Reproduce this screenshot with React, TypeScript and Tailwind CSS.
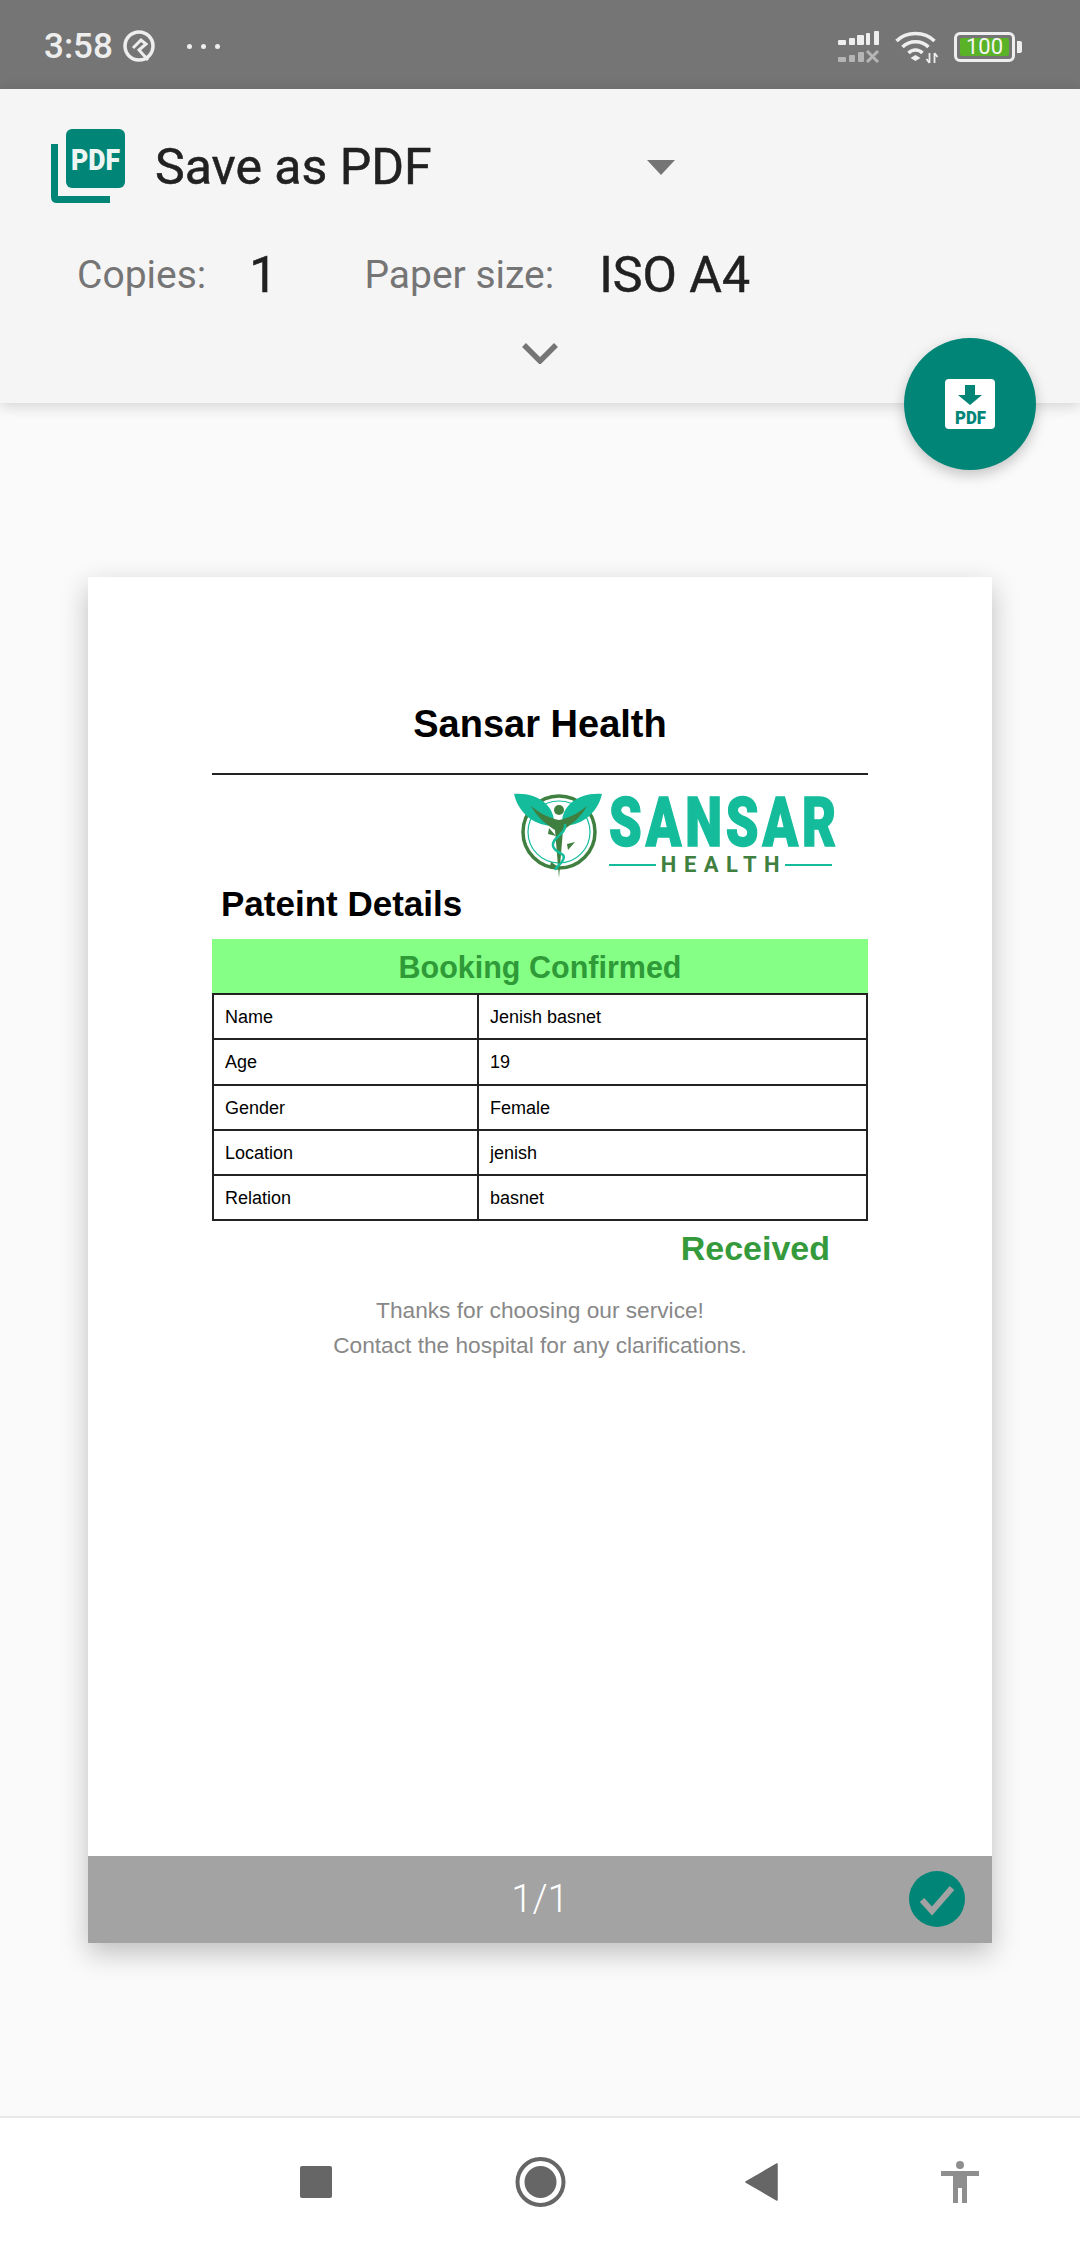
const rows = [
  ['Name', 'Jenish basnet'],
  ['Age', '19'],
  ['Gender', 'Female'],
  ['Location', 'jenish'],
  ['Relation', 'basnet'],
];

function StatusBar() {
  return (
    <div className="h-[89px] bg-[#757575] flex items-center pt-[4px] relative shrink-0">
      <span className="ml-[44px] font-['Roboto',sans-serif] font-medium text-[35px] leading-none text-[#eeeeee]">3:58</span>
      <svg width="36" height="36" viewBox="0 0 36 36" className="ml-[8px]">
        <circle cx="18" cy="17" r="14" fill="none" stroke="#eeeeee" strokeWidth="3.5" />
        <path d="M12 19 L20 11 L25 15 L18 21 L27 31" fill="none" stroke="#eeeeee" strokeWidth="3" />
      </svg>
      <div className="ml-[30px] flex gap-[9px]">
        <span className="w-[5px] h-[5px] rounded-full bg-[#eeeeee]" />
        <span className="w-[5px] h-[5px] rounded-full bg-[#eeeeee]" />
        <span className="w-[5px] h-[5px] rounded-full bg-[#eeeeee]" />
      </div>
      <div className="ml-auto mr-[58px] flex items-center">
        <svg width="42" height="32" viewBox="0 0 42 32" className="mr-[14px]">
          <g fill="#eeeeee">
            <rect x="0" y="9" width="8" height="5" rx="1" />
            <rect x="11" y="7" width="6" height="7" rx="1" />
            <rect x="19" y="4" width="7" height="10" rx="1" />
            <rect x="28" y="2" width="4" height="12" rx="1" />
            <rect x="36" y="0" width="5" height="14" rx="1" />
          </g>
          <g fill="#b5b5b5">
            <rect x="0" y="26" width="8" height="5" rx="1" />
            <rect x="11" y="24" width="6" height="7" rx="1" />
            <rect x="20" y="21" width="6" height="10" rx="1" />
          </g>
          <path d="M29 20 L40 31 M40 20 L29 31" stroke="#b5b5b5" strokeWidth="3" />
        </svg>
        <svg width="45" height="34" viewBox="0 0 44 34" className="mr-[15px]">
          <path d="M2 11 C12 1 30 1 40 11" fill="none" stroke="#eeeeee" strokeWidth="3.5" />
          <path d="M8 17 C15 10 27 10 34 17" fill="none" stroke="#eeeeee" strokeWidth="3.5" />
          <path d="M14 23 C18 19 24 19 28 23" fill="none" stroke="#eeeeee" strokeWidth="3.5" />
          <path d="M16 28 L21 25 L26 28 L21 31 Z" fill="#eeeeee" />
          <path d="M35 23 V33 M35 33 L32 29 M40 33 V23 M40 23 L43 27" fill="none" stroke="#eeeeee" strokeWidth="1.8" />
        </svg>
        <div className="w-[61px] h-[30px] rounded-[6px] border-[3px] border-[#eeeeee] flex items-center justify-center p-[3px]">
          <div className="w-full h-full bg-[#5ab226] rounded-[2px] flex items-center justify-center font-['Roboto',sans-serif] text-[22px] leading-none text-[#f4f4f4]">100</div>
        </div>
        <span className="ml-[2px] w-[5px] h-[12px] rounded-r-[2px] bg-[#eeeeee]" />
      </div>
    </div>
  );
}

function Header() {
  return (
    <div className="h-[314px] bg-[#f5f5f5] shrink-0 shadow-[0_3px_14px_rgba(0,0,0,0.16)] relative z-10 font-['Roboto',sans-serif]">
      <div className="flex items-center pt-[40px] pl-[51px]">
        <svg width="74" height="74" viewBox="0 0 74 74">
          <path d="M0 15 H7 V67 H59 V74 H6 Q0 74 0 68 Z" fill="#008577" />
          <rect x="15" y="0" width="59" height="59" rx="6" fill="#008577" />
          <text x="20" y="41" textLength="49" lengthAdjust="spacingAndGlyphs" fontFamily="Roboto" fontWeight="900" fontSize="29" fill="#eef6f4">PDF</text>
        </svg>
        <span className="ml-[30px] text-[50px] leading-[56px] text-[#212121] [-webkit-text-stroke:0.5px_#212121] mt-[2px]">Save as PDF</span>
        <svg width="28" height="15" viewBox="0 0 28 15" className="ml-[215px] mt-[2px]">
          <path d="M0 0 H28 L14 15 Z" fill="#757575" />
        </svg>
      </div>
      <div className="flex items-center mt-[42px] pl-[77px] h-[60px]">
        <span className="text-[39px] text-[#757575]">Copies:</span>
        <span className="ml-[43px] text-[50px] text-[#212121] [-webkit-text-stroke:0.5px_#212121]">1</span>
        <span className="ml-[87px] text-[39px] text-[#757575]">Paper size:</span>
        <span className="ml-[45px] text-[50px] text-[#212121] [-webkit-text-stroke:0.5px_#212121]">ISO A4</span>
      </div>
      <div className="flex justify-center mt-[37px]">
        <svg width="36" height="22" viewBox="0 0 36 22">
          <path d="M2 3 L18 19 L34 3" fill="none" stroke="#757575" strokeWidth="5.5" />
        </svg>
      </div>
      <div className="absolute right-[44px] top-[249px] w-[132px] h-[132px] rounded-full bg-[#008577] shadow-[0_5px_14px_rgba(0,0,0,0.22)] flex items-center justify-center">
        <svg width="50" height="50" viewBox="0 0 50 50">
          <rect width="50" height="50" rx="4" fill="#ffffff" />
          <path d="M20 6 H30 V16 H37 L25 26 L13 16 H20 Z" fill="#008577" />
          <text x="10" y="45" textLength="31" lengthAdjust="spacingAndGlyphs" fontFamily="Roboto" fontWeight="900" fontSize="19" fill="#008577">PDF</text>
        </svg>
      </div>
    </div>
  );
}

function Logo() {
  return (
    <div className="flex items-start">
      <svg width="100" height="104" viewBox="0 0 100 104">
        <g transform="translate(-508 -780)">
          <circle cx="558" cy="832" r="36" fill="none" stroke="#3f8040" strokeWidth="3.5" />
          <circle cx="558" cy="832" r="31" fill="none" stroke="#14bc9b" strokeWidth="1.2" />
          <path d="M513 794 C535 792 555 805 553 826 C535 826 518 815 513 794 Z" fill="#14bc9b" />
          <path d="M601 794 C579 792 559 805 561 826 C579 826 596 815 601 794 Z" fill="#14bc9b" />
          <path d="M530 806 C540 814 548 818 558 820 C568 818 576 814 586 806 C578 820 568 826 562 830 L558 878 L554 830 C548 826 538 820 530 806 Z" fill="#3f8040" />
          <circle cx="558" cy="810" r="5" fill="#3f8040" />
          <path d="M564 824 C566 834 550 838 552 846 C554 854 566 852 562 860 C560 864 556 866 554 870" fill="none" stroke="#14bc9b" strokeWidth="2.5" />
          <path d="M548 828 L555 836 L547 834 Z M566 844 L574 842 L567 850 Z M550 862 L556 866 L549 866 Z" fill="#3f8040" />
        </g>
      </svg>
      <div className="w-[223px] pt-[15px] font-['Roboto',sans-serif]">
        <div className="h-[56px] text-[68px] leading-[56px] font-black tracking-[5px] text-[#14bc9b] [-webkit-text-stroke:1.5px_#14bc9b] whitespace-nowrap origin-left scale-x-[0.77]">SANSAR</div>
        <div className="mt-[3px] flex items-center gap-[5px]">
          <span className="flex-1 h-[2px] bg-[#14bc9b]" />
          <span className="text-[22px] leading-[22px] font-bold tracking-[7.5px] text-[#3f8040] mr-[-7px]">HEALTH</span>
          <span className="flex-1 h-[2px] bg-[#14bc9b]" />
        </div>
      </div>
    </div>
  );
}

function Page() {
  return (
    <div className="mx-[88px] mt-[174px] h-[1366px] bg-white shadow-[0_10px_26px_rgba(0,0,0,0.24)] flex flex-col font-['Liberation_Sans',Arial,sans-serif]">
      <div className="px-[124px] pt-[125px] flex-1">
        <div className="text-center font-bold text-[38px] leading-[44px] text-black">Sansar Health</div>
        <div className="mt-[27px] border-t-2 border-[#222222]" />
        <div className="mt-[5px] flex justify-end pr-[36px] h-[104px]">
          <Logo />
        </div>
        <div className="pl-[9px] font-bold text-[35px] leading-[40px] text-black">Pateint Details</div>
        <div className="mt-[15px] h-[54px] pt-[3px] bg-[#85ff85] flex items-center justify-center font-bold text-[30.5px] text-[#2e9a38]">Booking Confirmed</div>
        <table className="w-full table-fixed border-collapse text-[18px] text-black">
          <tbody>
            {rows.map(([label, value]) => (
              <tr key={label} className="h-[45.3px]">
                <td className="w-[265px] border-2 border-[#222222] pl-[11px] pt-[2px]">{label}</td>
                <td className="border-2 border-[#222222] pl-[11px] pt-[2px]">{value}</td>
              </tr>
            ))}
          </tbody>
        </table>
        <div className="mt-[7px] pr-[38px] text-right font-bold text-[34px] leading-[40px] text-[#359a3c]">Received</div>
        <div className="mt-[25px] text-center text-[22.7px] leading-[34.5px] text-[#888888]">
          <div>Thanks for choosing our service!</div>
          <div>Contact the hospital for any clarifications.</div>
        </div>
      </div>
      <div className="h-[87px] bg-[#a3a3a3] flex items-center justify-center relative">
        <span className="font-['Roboto',sans-serif] font-light text-[38px] text-white">1/1</span>
        <svg width="56" height="56" viewBox="0 0 56 56" className="absolute right-[27px] top-[15px]">
          <circle cx="28" cy="28" r="28" fill="#008577" />
          <path d="M13 29 L23 40 L43 17" fill="none" stroke="#a3a3a3" strokeWidth="6" />
        </svg>
      </div>
    </div>
  );
}

function NavBar() {
  return (
    <div className="mt-auto h-[130px] bg-white border-t-2 border-[#e8e8e8] flex items-start relative shrink-0">
      <div className="flex items-center pl-[300px] pt-[39px]">
        <div className="w-[32px] h-[32px] rounded-[2px] bg-[#666666]" />
        <svg width="51" height="50" viewBox="0 0 51 50" className="ml-[183px]">
          <circle cx="25.5" cy="25" r="23" fill="none" stroke="#666666" strokeWidth="4" />
          <circle cx="25.5" cy="25" r="16" fill="#666666" />
        </svg>
        <svg width="33" height="38" viewBox="0 0 33 38" className="ml-[179px]">
          <path d="M32 1 V37 L1 19 Z" fill="#666666" stroke="#666666" strokeLinejoin="round" strokeWidth="1.5" />
        </svg>
        <svg width="38" height="42" viewBox="0 0 38 42" className="ml-[163px]">
          <circle cx="19" cy="4" r="4" fill="#8e8e8e" />
          <path d="M0 10 H38 V15 H26 V42 H21 V27 H17 V42 H12 V15 H0 Z" fill="#8e8e8e" />
        </svg>
      </div>
    </div>
  );
}

export default function App() {
  return (
    <div className="w-[1080px] h-[2246px] bg-[#fafafa] flex flex-col overflow-hidden">
      <StatusBar />
      <Header />
      <Page />
      <NavBar />
    </div>
  );
}
